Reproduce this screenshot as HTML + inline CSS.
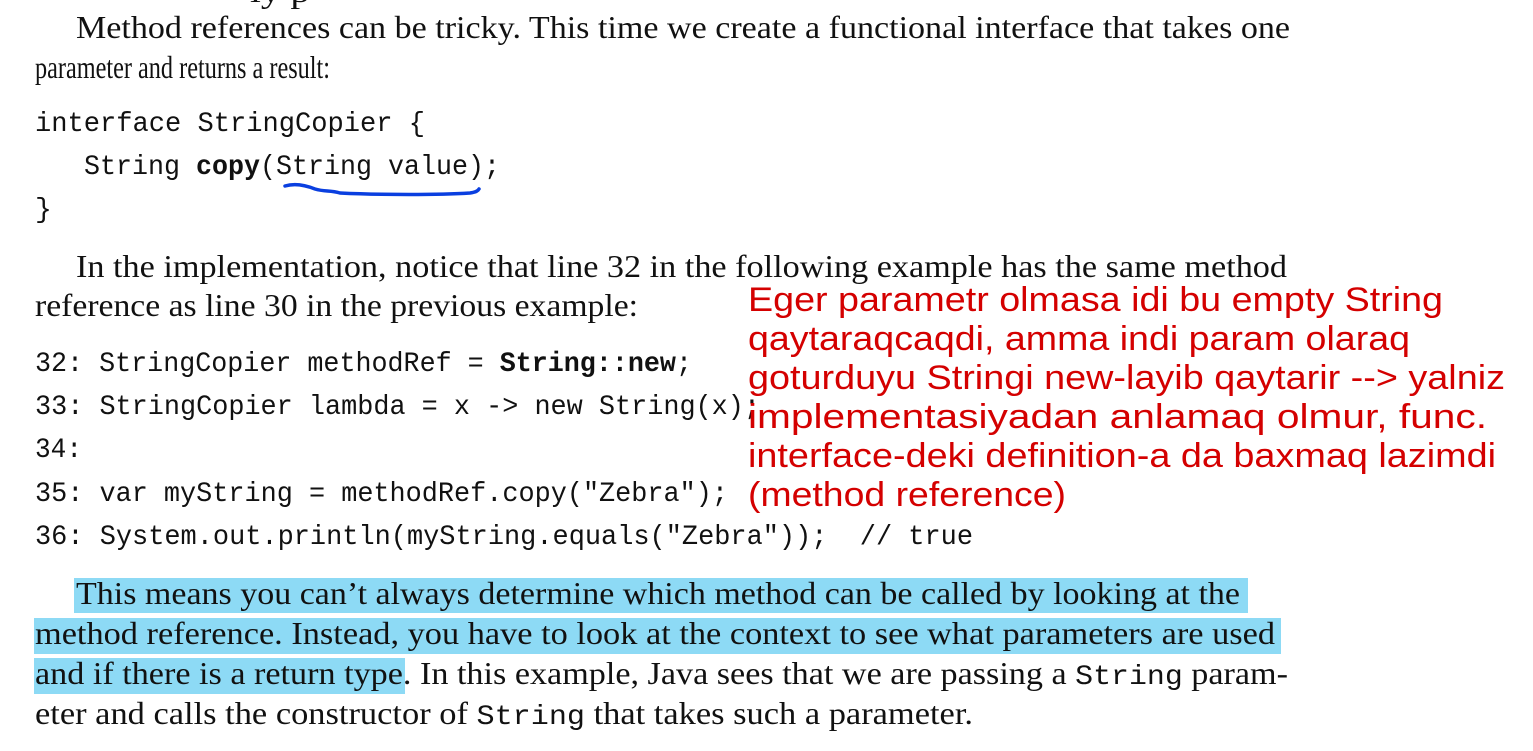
<!DOCTYPE html>
<html><head><meta charset="utf-8"><style>
html,body{margin:0;padding:0;background:#fff;width:1533px;height:751px;overflow:hidden}
svg{display:block}
.s{font-family:"Liberation Serif",serif;font-size:32px;fill:#111}
.m{font-family:"Liberation Mono",monospace;font-size:28px;fill:#111}
.r{font-family:"Liberation Sans",sans-serif;font-size:34px;fill:#d40000}
</style></head><body>
<svg width="1533" height="751" viewBox="0 0 1533 751" xmlns="http://www.w3.org/2000/svg">
<text class="s" x="250" y="2" textLength="60" lengthAdjust="spacingAndGlyphs">ly p</text>
<text class="s" x="76" y="38" textLength="1214" lengthAdjust="spacingAndGlyphs">Method references can be tricky. This time we create a functional interface that takes one</text>
<text class="s" x="35" y="78" textLength="295" lengthAdjust="spacingAndGlyphs">parameter and returns a result:</text>
<text class="m" x="35" y="131" textLength="390" lengthAdjust="spacingAndGlyphs">interface StringCopier {</text>
<text class="m" x="84" y="174" textLength="416" lengthAdjust="spacingAndGlyphs">String <tspan font-weight="bold">copy</tspan>(String value);</text>
<text class="m" x="35" y="217">}</text>
<path d="M285 186 C295 183 305 185 315 189 C325 192 330 190 340 193 C380 195 440 195 470 193 C476 192 478 191 479 189" stroke="#0a3fe0" stroke-width="3.5" fill="none" stroke-linecap="round"/>
<text class="s" x="76" y="277" textLength="1211" lengthAdjust="spacingAndGlyphs">In the implementation, notice that line 32 in the following example has the same method</text>
<text class="s" x="35" y="316" textLength="603" lengthAdjust="spacingAndGlyphs">reference as line 30 in the previous example:</text>
<text class="m" x="35" y="371" textLength="657" lengthAdjust="spacingAndGlyphs">32: StringCopier methodRef = <tspan font-weight="bold">String::new</tspan>;</text>
<text class="m" x="35" y="414" textLength="725" lengthAdjust="spacingAndGlyphs">33: StringCopier lambda = x -&gt; new String(x);</text>
<text class="m" x="35" y="457" textLength="47" lengthAdjust="spacingAndGlyphs">34:</text>
<text class="m" x="35" y="501" textLength="693" lengthAdjust="spacingAndGlyphs">35: var myString = methodRef.copy("Zebra");</text>
<text class="m" x="35" y="544" xml:space="preserve" textLength="938" lengthAdjust="spacingAndGlyphs">36: System.out.println(myString.equals("Zebra"));  // true</text>
<rect x="74" y="578" width="1174" height="35" fill="#8ddaf5"/>
<rect x="34" y="618" width="1247" height="36" fill="#8ddaf5"/>
<rect x="34" y="658" width="371" height="36" fill="#8ddaf5"/>
<text class="s" x="76" y="604" textLength="1164" lengthAdjust="spacingAndGlyphs">This means you can’t always determine which method can be called by looking at the</text>
<text class="s" x="35" y="644" textLength="1240" lengthAdjust="spacingAndGlyphs">method reference. Instead, you have to look at the context to see what parameters are used</text>
<text class="s" x="35" y="684" textLength="1253" lengthAdjust="spacingAndGlyphs">and if there is a return type. In this example, Java sees that we are passing a <tspan class="m">String</tspan> param-</text>
<text class="s" x="35" y="724" textLength="938" lengthAdjust="spacingAndGlyphs">eter and calls the constructor of <tspan class="m">String</tspan> that takes such a parameter.</text>
<text class="r" x="748" y="311" textLength="695" lengthAdjust="spacingAndGlyphs">Eger parametr olmasa idi bu empty String</text>
<text class="r" x="748" y="350" textLength="662" lengthAdjust="spacingAndGlyphs">qaytaraqcaqdi, amma indi param olaraq</text>
<text class="r" x="748" y="389" textLength="757" lengthAdjust="spacingAndGlyphs">goturduyu Stringi new-layib qaytarir --&gt; yalniz</text>
<text class="r" x="748" y="428" textLength="739" lengthAdjust="spacingAndGlyphs">implementasiyadan anlamaq olmur, func.</text>
<text class="r" x="748" y="467" textLength="748" lengthAdjust="spacingAndGlyphs">interface-deki definition-a da baxmaq lazimdi</text>
<text class="r" x="748" y="506" textLength="318" lengthAdjust="spacingAndGlyphs">(method reference)</text>
</svg>
</body></html>
